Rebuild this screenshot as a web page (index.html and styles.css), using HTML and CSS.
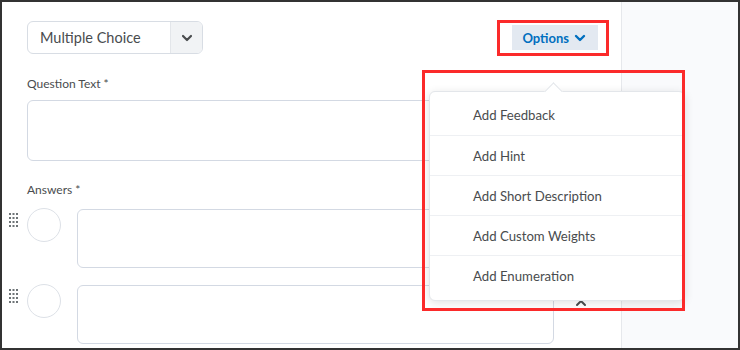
FILE: index.html
```html
<!DOCTYPE html>
<html lang="en">

<head>
    <meta charset="UTF-8" />
    <meta name="viewport" content="width=device-width, initial-scale=1.0" />
    <title>Question Editor</title>
    <link rel="stylesheet" href="styles.css">
</head>

<body>
    <div class="frame">
        <div class="editor">
            <div class="top-row">
                <div class="type-select">
                    <span class="type-label">Multiple Choice</span>
                    <span class="type-toggle">
                        <svg width="12" height="8" viewBox="0 0 12 8"><path d="M2 2l4 4 4-4" fill="none" stroke="#494c4e" stroke-width="2.2" stroke-linecap="round" stroke-linejoin="round"/></svg>
                    </span>
                </div>
                <button class="options-btn">Options
                    <svg width="12" height="8" viewBox="0 0 12 8"><path d="M2 2l4 4 4-4" fill="none" stroke="#006fbf" stroke-width="2.4" stroke-linecap="round" stroke-linejoin="round"/></svg>
                </button>
            </div>

            <label class="field-label">Question Text *</label>
            <div class="question-box"></div>

            <label class="field-label answers-label">Answers *</label>
            <div class="answers">
                <div class="answer-row">
                    <svg class="handle" width="9" height="15" viewBox="0 0 9 15">
                        <g fill="#6e7477">
                            <rect x="0" y="0" width="2" height="2"/><rect x="3.5" y="0" width="2" height="2"/><rect x="7" y="0" width="2" height="2"/>
                            <rect x="0" y="4" width="2" height="2"/><rect x="3.5" y="4" width="2" height="2"/><rect x="7" y="4" width="2" height="2"/>
                            <rect x="0" y="8" width="2" height="2"/><rect x="3.5" y="8" width="2" height="2"/><rect x="7" y="8" width="2" height="2"/>
                            <rect x="0" y="12" width="2" height="2"/><rect x="3.5" y="12" width="2" height="2"/><rect x="7" y="12" width="2" height="2"/>
                        </g>
                    </svg>
                    <span class="radio"></span>
                    <div class="answer-box"></div>
                    <span class="remove">
                        <svg width="14" height="14" viewBox="0 0 14 14"><path d="M3 3l8 8M11 3l-8 8" stroke="#494c4e" stroke-width="2" stroke-linecap="round"/></svg>
                    </span>
                </div>
                <div class="answer-row">
                    <svg class="handle" width="9" height="15" viewBox="0 0 9 15">
                        <g fill="#6e7477">
                            <rect x="0" y="0" width="2" height="2"/><rect x="3.5" y="0" width="2" height="2"/><rect x="7" y="0" width="2" height="2"/>
                            <rect x="0" y="4" width="2" height="2"/><rect x="3.5" y="4" width="2" height="2"/><rect x="7" y="4" width="2" height="2"/>
                            <rect x="0" y="8" width="2" height="2"/><rect x="3.5" y="8" width="2" height="2"/><rect x="7" y="8" width="2" height="2"/>
                            <rect x="0" y="12" width="2" height="2"/><rect x="3.5" y="12" width="2" height="2"/><rect x="7" y="12" width="2" height="2"/>
                        </g>
                    </svg>
                    <span class="radio"></span>
                    <div class="answer-box"></div>
                    <span class="remove">
                        <svg width="14" height="14" viewBox="0 0 14 14"><path d="M3 3l8 8M11 3l-8 8" stroke="#494c4e" stroke-width="2" stroke-linecap="round"/></svg>
                    </span>
                </div>
            </div>

            <div class="options-menu">
                <div class="menu-item">Add Feedback</div>
                <div class="menu-item">Add Hint</div>
                <div class="menu-item">Add Short Description</div>
                <div class="menu-item">Add Custom Weights</div>
                <div class="menu-item">Add Enumeration</div>
            </div>

            <div class="mark mark-options"></div>
            <div class="mark mark-menu"></div>
        </div>
        <div class="side-panel"></div>
    </div>
</body>

</html>
```

FILE: styles.css
```css
html,
body {
    margin: 0;
    height: 100%;
    font-family: 'Lato', 'Liberation Sans', sans-serif;
    color: #494c4e;
}

.frame {
    display: flex;
    width: 740px;
    height: 350px;
    box-sizing: border-box;
    border: 2px solid #333;
    background: #fff;
    overflow: hidden;
}

.editor {
    position: relative;
    flex: 1;
    padding: 19px 23px 0 25px;
}

.side-panel {
    width: 118px;
    background: #f9fafc;
    border-left: 1px solid #e6e8ec;
}

.top-row {
    display: flex;
    justify-content: space-between;
    align-items: center;
}

.type-select {
    display: flex;
    width: 176px;
    height: 33px;
    box-sizing: border-box;
    border: 1px solid #d8dde4;
    border-radius: 6px;
    overflow: hidden;
}

.type-label {
    flex: 1;
    display: flex;
    align-items: center;
    padding-left: 12px;
    font-size: 14.5px;
    color: #494c4e;
}

.type-toggle {
    width: 31px;
    display: flex;
    align-items: center;
    justify-content: center;
    background: #f1f3f5;
    border-left: 1px solid #e3e6ea;
}

.options-btn {
    display: flex;
    align-items: center;
    gap: 5px;
    height: 25px;
    padding: 0 12px 0 10px;
    border: none;
    background: #e3e9f1;
    color: #006fbf;
    font-family: inherit;
    font-size: 13px;
    font-weight: 700;
}

.field-label {
    display: block;
    margin-top: 22px;
    font-size: 12px;
    color: #494c4e;
}

.question-box {
    margin-top: 9px;
    height: 59px;
    border: 1px solid #d3d9e3;
    border-radius: 6px;
}

.answers-label {
    margin-top: 21px;
}

.answers {
    display: flex;
    flex-direction: column;
    gap: 16px;
    margin: 11px 0 0 -18px;
}

.answer-row {
    display: flex;
    align-items: flex-start;
}

.handle {
    margin-top: 5px;
    margin-right: 9px;
}

.radio {
    width: 34px;
    height: 34px;
    box-sizing: border-box;
    border: 1.5px solid #dde1e7;
    border-radius: 50%;
}

.answer-box {
    width: 477px;
    height: 59px;
    box-sizing: border-box;
    margin-left: 16px;
    margin-top: 1px;
    border: 1.5px solid #d3d9e3;
    border-radius: 6px;
}

.remove {
    display: flex;
    align-items: center;
    justify-content: center;
    width: 34px;
    height: 34px;
    margin-left: 10px;
}

.options-menu {
    position: absolute;
    top: 89px;
    left: 427px;
    width: 254px;
    padding: 3px 0 5px;
    background: #fff;
    border: 1px solid #e3e6ea;
    border-radius: 6px;
    box-shadow: 0 2px 10px rgba(0, 0, 0, 0.12);
}

.options-menu::before {
    content: "";
    position: absolute;
    top: -7px;
    left: 117px;
    width: 12px;
    height: 12px;
    background: #fff;
    border-left: 1px solid #e3e6ea;
    border-top: 1px solid #e3e6ea;
    transform: rotate(45deg);
}

.menu-item {
    height: 40px;
    display: flex;
    align-items: center;
    padding-left: 43px;
    font-size: 13.2px;
    color: #494c4e;
    border-top: 1px solid #eef0f3;
    box-sizing: border-box;
}

.menu-item:first-child {
    border-top: none;
}

.mark {
    position: absolute;
    border: 3.5px solid #fb2a2a;
    box-sizing: border-box;
}

.mark-options {
    top: 18px;
    left: 495px;
    width: 112px;
    height: 36px;
}

.mark-menu {
    top: 68px;
    left: 420px;
    width: 263px;
    height: 241px;
}
```
